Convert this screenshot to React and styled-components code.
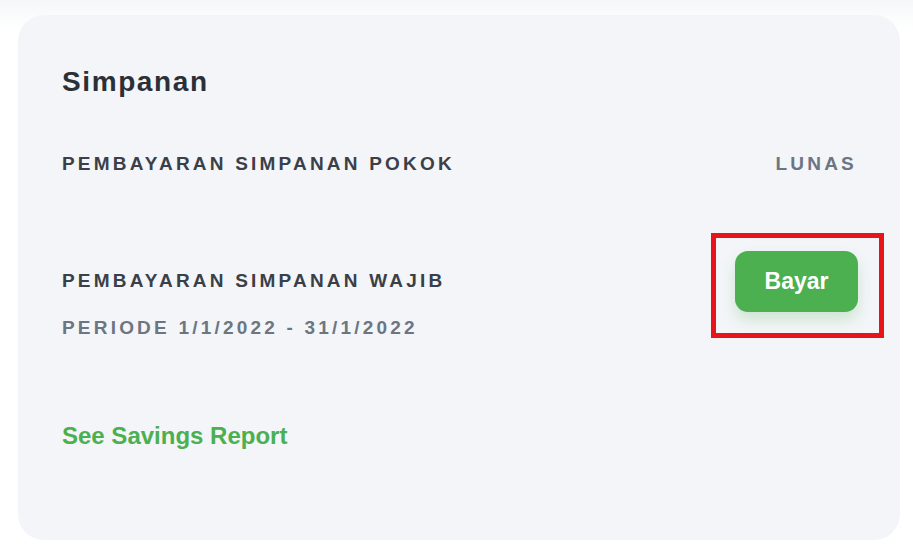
import React from 'react';
import styled, { createGlobalStyle } from 'styled-components';

const GlobalStyle = createGlobalStyle`
  html, body {
    margin: 0;
    padding: 0;
    background: #ffffff;
    font-family: "Liberation Sans", Arial, sans-serif;
  }
`;

const Page = styled.div`
  width: 913px;
  height: 551px;
  overflow: hidden;
  background: linear-gradient(#f6f7f9 0px, #fafbfc 14px, #ffffff 30px);
  padding: 15px 13px 0 18px;
  box-sizing: border-box;
`;

const Card = styled.section`
  height: 525px;
  background: #f3f5f8;
  border-radius: 26px;
  padding: 51px 43px 0 44px;
  box-sizing: border-box;
  display: flex;
  flex-direction: column;
`;

const Title = styled.h2`
  margin: 0;
  font-size: 28px;
  font-weight: 700;
  color: #2b3038;
  letter-spacing: 1.6px;
  line-height: 32px;
`;

const Row = styled.div`
  display: flex;
  justify-content: space-between;
  align-items: ${(p) => p.$align || 'center'};
  margin-top: ${(p) => p.$top}px;
`;

const Info = styled.div`
  display: flex;
  flex-direction: column;
  gap: 27px;
  padding-top: 38px;
`;

const Label = styled.span`
  font-size: 19px;
  font-weight: 700;
  letter-spacing: 3.2px;
  line-height: 20px;
  color: ${(p) => (p.$muted ? '#6c7682' : '#3b4048')};
`;

const Highlight = styled.div`
  border: 5px solid #e8141c;
  padding: 13px 21px 21px 19px;
  margin-right: -27px;
`;

const PayButton = styled.button`
  border: none;
  width: 123px;
  height: 61px;
  border-radius: 13px;
  background: #4caf50;
  color: #ffffff;
  font-family: "Liberation Sans", Arial, sans-serif;
  font-size: 23px;
  font-weight: 700;
  box-shadow: 0 8px 14px rgba(76, 175, 80, 0.22);
  cursor: pointer;
`;

const ReportLink = styled.a`
  margin-top: 85px;
  font-size: 24px;
  font-weight: 700;
  color: #4caf50;
  text-decoration: none;
  line-height: 26px;
`;

export default function App() {
  return (
    <>
      <GlobalStyle />
      <Page>
        <Card>
          <Title>Simpanan</Title>
          <Row $top={56}>
            <Label>PEMBAYARAN SIMPANAN POKOK</Label>
            <Label $muted>LUNAS</Label>
          </Row>
          <Row $top={59} $align="flex-start">
            <Info>
              <Label>PEMBAYARAN SIMPANAN WAJIB</Label>
              <Label $muted>PERIODE 1/1/2022 - 31/1/2022</Label>
            </Info>
            <Highlight>
              <PayButton>Bayar</PayButton>
            </Highlight>
          </Row>
          <ReportLink href="#">See Savings Report</ReportLink>
        </Card>
      </Page>
    </>
  );
}
